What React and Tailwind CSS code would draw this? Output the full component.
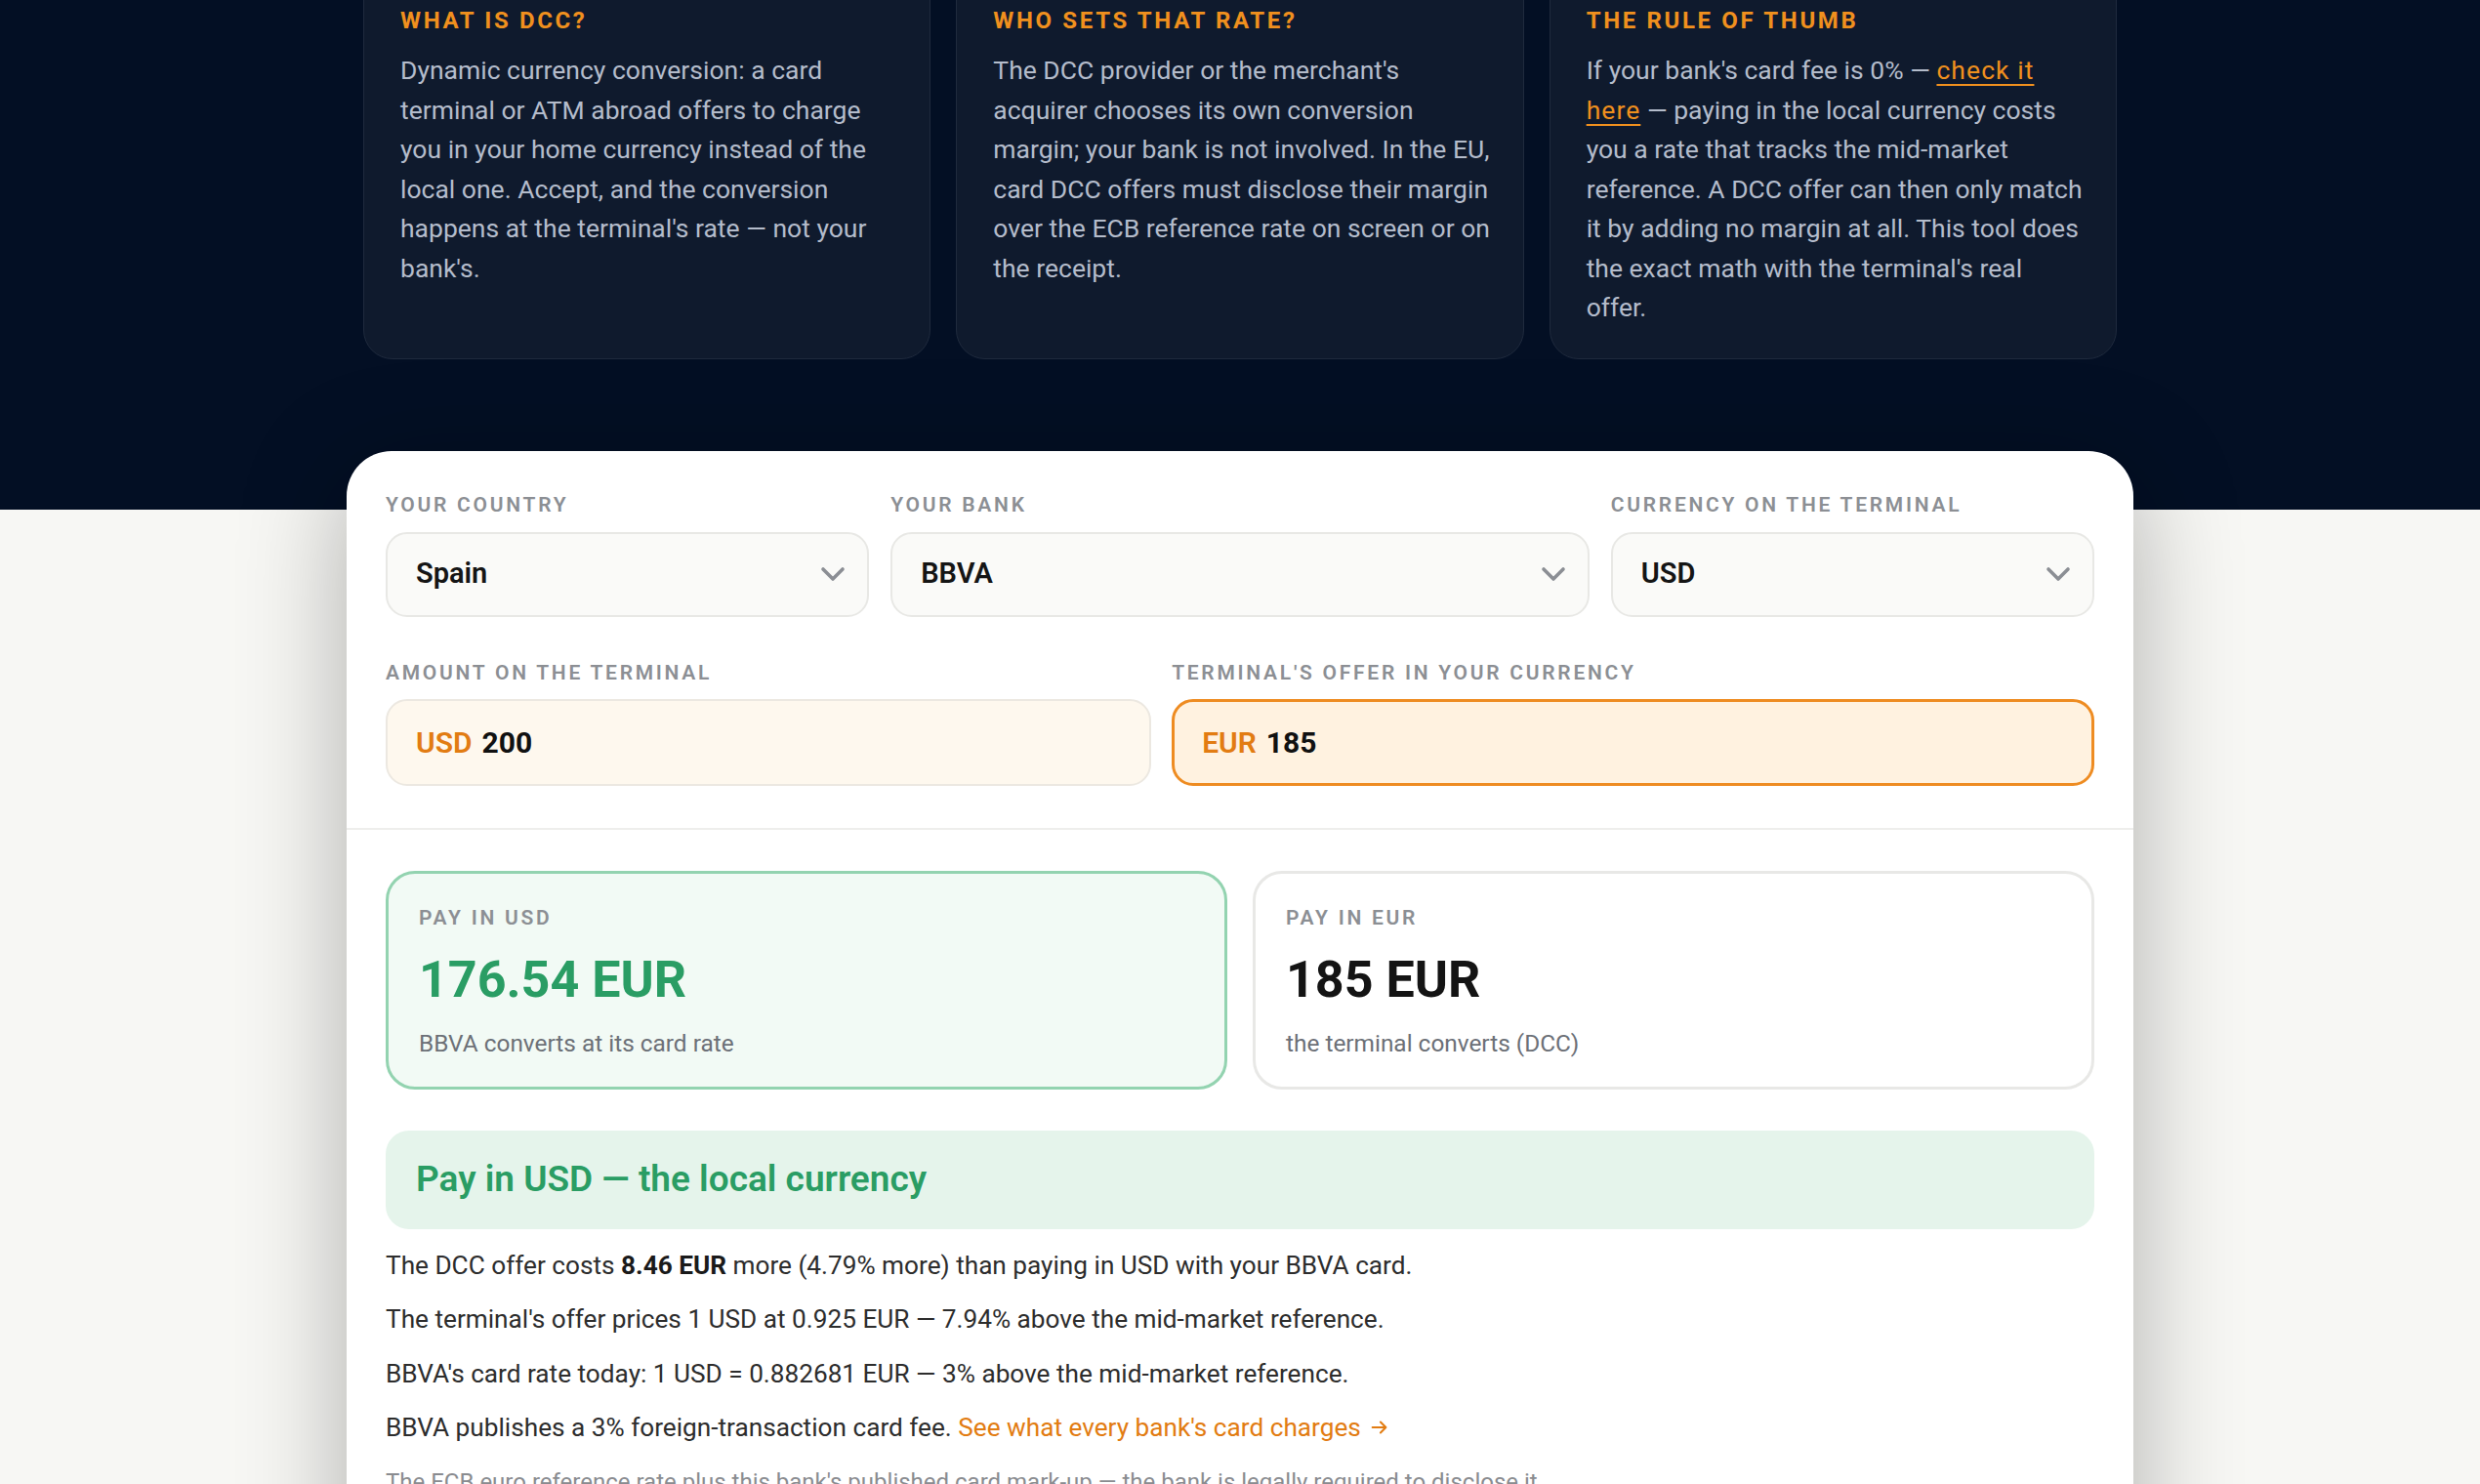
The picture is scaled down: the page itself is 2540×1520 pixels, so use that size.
import React from 'react';

const infoCards = [
  {
    title: 'What is DCC?',
    pad: 'pr-[26px]',
    body: (
      <>
        Dynamic currency conversion: a card terminal or ATM abroad offers to charge you in your home currency instead of the local one. Accept, and the conversion happens at the terminal's rate — not your bank's.
      </>
    ),
  },
  {
    title: 'Who sets that rate?',
    pad: 'pr-[26px]',
    body: (
      <>
        The DCC provider or the merchant's acquirer chooses its own conversion margin; your bank is not involved. In the EU, card DCC offers must disclose their margin over the ECB reference rate on screen or on the receipt.
      </>
    ),
  },
  {
    title: 'The rule of thumb',
    pad: 'pr-[32px]',
    body: (
      <>
        If your bank's card fee is 0% —{' '}
        <a href="#" className="text-[#f0901e] underline underline-offset-[5px] decoration-2 tracking-[0.04em]">
          check it here
        </a>{' '}
        — paying in the local currency costs you a rate that tracks the mid-market reference. A DCC offer can then only match it by adding no margin at all. This tool does the exact math with the terminal's real offer.
      </>
    ),
  },
];

function Chevron() {
  return (
    <svg width="26" height="16" viewBox="0 0 26 16" fill="none" className="shrink-0">
      <path d="M3 3l10 10 10-10" stroke="#8b8e94" strokeWidth="3.6" strokeLinecap="round" strokeLinejoin="round" />
    </svg>
  );
}

function Label({ children }) {
  return (
    <div className="text-[21px] leading-[28px] font-semibold tracking-[0.13em] uppercase text-[#8c8f94]">
      {children}
    </div>
  );
}

function SelectBox({ label, value }) {
  return (
    <div>
      <Label>{label}</Label>
      <div className="mt-[14px] h-[87px] rounded-[22px] border-2 border-[#e8e8e5] bg-[#fafaf8] flex items-center justify-between pl-[29px] pr-[22px]">
        <span className="text-[29px] font-semibold text-[#151515]">{value}</span>
        <Chevron />
      </div>
    </div>
  );
}

function ResultCard({ label, value, note, good }) {
  return (
    <div
      className={
        good
          ? 'rounded-[30px] border-[3px] border-[#93d3b0] bg-[#f2faf5] px-[31px] pt-[31px] pb-[28px]'
          : 'rounded-[30px] border-[3px] border-[#e8e8e6] bg-white px-[31px] pt-[31px] pb-[28px]'
      }
    >
      <div className="text-[21px] leading-[28px] font-semibold tracking-[0.13em] uppercase text-[#8c8f94]">{label}</div>
      <div className={good ? 'mt-[20px] text-[52px] leading-[60px] font-bold text-[#2a9d64]' : 'mt-[20px] text-[52px] leading-[60px] font-bold text-[#141414]'}>
        {value}
      </div>
      <div className="mt-[19px] text-[24.4px] leading-[32px] text-[#6c7077]">{note}</div>
    </div>
  );
}

export default function App() {
  return (
    <div className="h-screen overflow-hidden bg-[#f7f7f4] font-['Roboto',sans-serif]">
      {/* DARK INTRO */}
      <section className="bg-[#030f24] pb-[154px]">
        <div className="w-[1796px] mx-auto -mt-[34px] grid grid-cols-3 gap-[26px]">
          {infoCards.map((c) => (
            <div key={c.title} className={`rounded-[30px] border border-[#1f2a3d] bg-[#0f1a2d] pl-[37px] pt-[38px] pb-[31px] ${c.pad}`}>
              <h3 className="text-[24px] leading-[32px] font-bold uppercase tracking-[0.11em] text-[#f0901e]">{c.title}</h3>
              <p className="mt-[15px] text-[26.5px] leading-[40.5px] text-[#b4bccb]">{c.body}</p>
            </div>
          ))}
        </div>
      </section>

      {/* CALCULATOR */}
      <main className="relative w-[1830px] mx-auto -mt-[60px] rounded-t-[46px] bg-white shadow-[0_20px_110px_rgba(0,0,0,0.3)]">
        <div className="px-[40px] pt-[41px] pb-[43px]">
          <div className="grid grid-cols-[1fr_1.445fr_1fr] gap-[22px]">
            <SelectBox label="Your country" value="Spain" />
            <SelectBox label="Your bank" value="BBVA" />
            <SelectBox label="Currency on the terminal" value="USD" />
          </div>

          <div className="mt-[43px] grid grid-cols-[1fr_1.205fr] gap-[21px]">
            <div>
              <Label>Amount on the terminal</Label>
              <div className="mt-[13px] h-[89px] rounded-[22px] border-2 border-[#ece8e1] bg-[#fef8ee] flex items-center pl-[29px]">
                <span className="text-[30px] font-semibold text-[#e27c12]">USD</span>
                <span className="ml-[10px] text-[30px] font-bold text-[#111111]">200</span>
              </div>
            </div>
            <div>
              <Label>Terminal's offer in your currency</Label>
              <div className="mt-[13px] h-[89px] rounded-[22px] border-[3px] border-[#ee8c22] bg-[#fff2e0] flex items-center pl-[28px]">
                <span className="text-[30px] font-semibold text-[#e27c12]">EUR</span>
                <span className="ml-[10px] text-[30px] font-bold text-[#111111]">185</span>
              </div>
            </div>
          </div>
        </div>

        <div className="border-t-2 border-[#eeeeec]" />

        <div className="px-[40px] pt-[42px]">
          <div className="grid grid-cols-2 gap-[26px]">
            <ResultCard good label="Pay in USD" value="176.54 EUR" note="BBVA converts at its card rate" />
            <ResultCard label="Pay in EUR" value="185 EUR" note="the terminal converts (DCC)" />
          </div>

          <div className="mt-[42px] h-[101px] rounded-[24px] bg-[#e5f4eb] flex items-center px-[31px]">
            <span className="text-[37px] font-semibold text-[#2a9d64]">Pay in USD — the local currency</span>
          </div>

          <div className="mt-[17px] space-y-[15.5px] text-[26.2px] leading-[40px] text-[#2d2d2d]">
            <p>
              The DCC offer costs <strong className="font-bold text-[#1a1a1a]">8.46 EUR</strong> more (4.79% more) than paying in USD with your BBVA card.
            </p>
            <p>The terminal's offer prices 1 USD at 0.925 EUR — 7.94% above the mid-market reference.</p>
            <p>BBVA's card rate today: 1 USD = 0.882681 EUR — 3% above the mid-market reference.</p>
            <p className="flex items-center">
              <span>BBVA publishes a 3% foreign-transaction card fee.&nbsp;</span>
              <a href="#" className="inline-flex items-center text-[#e27c12]">
                See what every bank's card charges
                <svg width="22" height="22" viewBox="0 0 24 24" fill="none" className="ml-[8px]">
                  <path d="M4 12h15M13 6l6 6-6 6" stroke="#e27c12" strokeWidth="2.2" strokeLinecap="round" strokeLinejoin="round" />
                </svg>
              </a>
            </p>
            <p className="text-[24px] text-[#8a8c90]">
              The ECB euro reference rate plus this bank's published card mark-up — the bank is legally required to disclose it.
            </p>
          </div>
          <div className="h-[200px]" />
        </div>
      </main>
    </div>
  );
}
